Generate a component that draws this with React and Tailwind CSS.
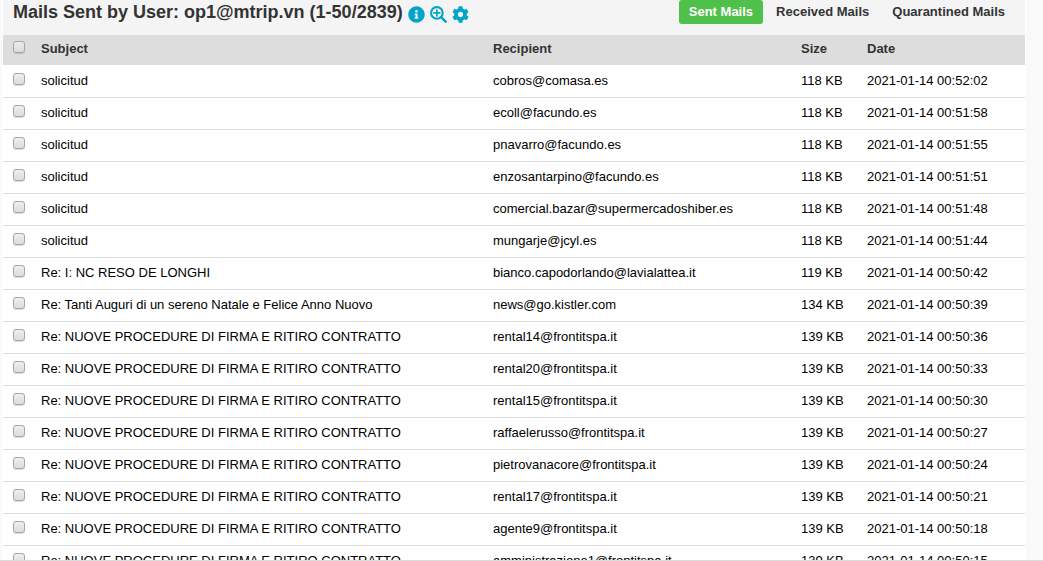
import { FaInfoCircle, FaCog } from "react-icons/fa";

const PROC = "Re: NUOVE PROCEDURE DI FIRMA E RITIRO CONTRATTO";

const mails = [
  ["solicitud", "cobros@comasa.es", "118 KB", "2021-01-14 00:52:02"],
  ["solicitud", "ecoll@facundo.es", "118 KB", "2021-01-14 00:51:58"],
  ["solicitud", "pnavarro@facundo.es", "118 KB", "2021-01-14 00:51:55"],
  ["solicitud", "enzosantarpino@facundo.es", "118 KB", "2021-01-14 00:51:51"],
  ["solicitud", "comercial.bazar@supermercadoshiber.es", "118 KB", "2021-01-14 00:51:48"],
  ["solicitud", "mungarje@jcyl.es", "118 KB", "2021-01-14 00:51:44"],
  ["Re: I: NC RESO DE LONGHI", "bianco.capodorlando@lavialattea.it", "119 KB", "2021-01-14 00:50:42"],
  ["Re: Tanti Auguri di un sereno Natale e Felice Anno Nuovo", "news@go.kistler.com", "134 KB", "2021-01-14 00:50:39"],
  [PROC, "rental14@frontitspa.it", "139 KB", "2021-01-14 00:50:36"],
  [PROC, "rental20@frontitspa.it", "139 KB", "2021-01-14 00:50:33"],
  [PROC, "rental15@frontitspa.it", "139 KB", "2021-01-14 00:50:30"],
  [PROC, "raffaelerusso@frontitspa.it", "139 KB", "2021-01-14 00:50:27"],
  [PROC, "pietrovanacore@frontitspa.it", "139 KB", "2021-01-14 00:50:24"],
  [PROC, "rental17@frontitspa.it", "139 KB", "2021-01-14 00:50:21"],
  [PROC, "agente9@frontitspa.it", "139 KB", "2021-01-14 00:50:18"],
  [PROC, "amministrazione1@frontitspa.it", "139 KB", "2021-01-14 00:50:15"],
];

function ZoomInIcon({ size }) {
  return (
    <svg width={size} height={size} viewBox="0 0 17 17" fill="none" stroke="currentColor">
      <circle cx="6.9" cy="6.9" r="5.8" strokeWidth="2.1" />
      <path d="M11.4 11.4 15.6 15.6" strokeWidth="2.6" strokeLinecap="round" />
      <path d="M6.9 4v5.8M4 6.9h5.8" strokeWidth="1.7" strokeLinecap="round" />
    </svg>
  );
}

function Check({ label }) {
  return (
    <input
      type="checkbox"
      aria-label={label}
      className="block size-3 appearance-none rounded-[3px] border border-[#a6a6a6] bg-linear-to-b from-[#ededed] to-[#dcdcdc] shadow-[0_1px_1px_rgba(0,0,0,0.15)] checked:from-[#00a5c8] checked:to-[#00a5c8]"
    />
  );
}

function IconButton({ label, icon: Icon }) {
  return (
    <button type="button" aria-label={label} className="text-[#00a5c8]">
      <Icon size={17} />
    </button>
  );
}

function Tab({ active, children }) {
  return (
    <button
      type="button"
      className={
        active
          ? "h-6 rounded-[3px] bg-[#4fc04a] px-2.5 text-[13px] font-bold text-white"
          : "h-6 px-2.5 text-[13px] font-bold"
      }
    >
      {children}
    </button>
  );
}

export default function App() {
  return (
    <div className="h-screen overflow-hidden border-b border-[#d9dade] bg-[#f9f9f9] pl-[2px] pr-[17px] font-['Liberation_Sans',Arial,sans-serif] text-[13px] text-[#333]">
      <main className="border-x border-white bg-white">
        <header className="flex h-[35px] items-start justify-between bg-[#f4f4f4] pl-2.5 pr-2.5">
          <div className="flex items-center gap-[5px]">
            <h1 className="whitespace-nowrap text-[18px] font-bold leading-6">
              Mails Sent by User: op1@mtrip.vn (1-50/2839)
            </h1>
            <div className="flex items-center gap-[5px] pt-[5px]">
              <IconButton label="Information" icon={FaInfoCircle} />
              <IconButton label="Search" icon={ZoomInIcon} />
              <IconButton label="Settings" icon={FaCog} />
            </div>
          </div>
          <nav className="flex gap-[3px] whitespace-nowrap">
            <Tab active>Sent Mails</Tab>
            <Tab>Received Mails</Tab>
            <Tab>Quarantined Mails</Tab>
          </nav>
        </header>
        <table className="w-full table-fixed border-collapse whitespace-nowrap text-left leading-4">
          <colgroup>
            <col className="w-[30px]" />
            <col />
            <col className="w-[308px]" />
            <col className="w-[66px]" />
            <col className="w-[166px]" />
          </colgroup>
          <thead className="bg-[#ddd]">
            <tr className="h-[30px]">
              <th className="pb-1.5 pl-2.5">
                <Check label="Select all mails" />
              </th>
              <th className="px-2 pb-0.5">Subject</th>
              <th className="px-2 pb-0.5">Recipient</th>
              <th className="px-2 pb-0.5">Size</th>
              <th className="px-2 pb-0.5">Date</th>
            </tr>
          </thead>
          <tbody className="text-black">
            {mails.map(([subject, recipient, size, date]) => (
              <tr key={date} className="h-8 border-b border-[#ddd]">
                <td className="pb-1 pl-2.5">
                  <Check label={`Select mail to ${recipient}`} />
                </td>
                <td className="px-2">{subject}</td>
                <td className="px-2">{recipient}</td>
                <td className="px-2">{size}</td>
                <td className="px-2">{date}</td>
              </tr>
            ))}
          </tbody>
        </table>
      </main>
    </div>
  );
}
